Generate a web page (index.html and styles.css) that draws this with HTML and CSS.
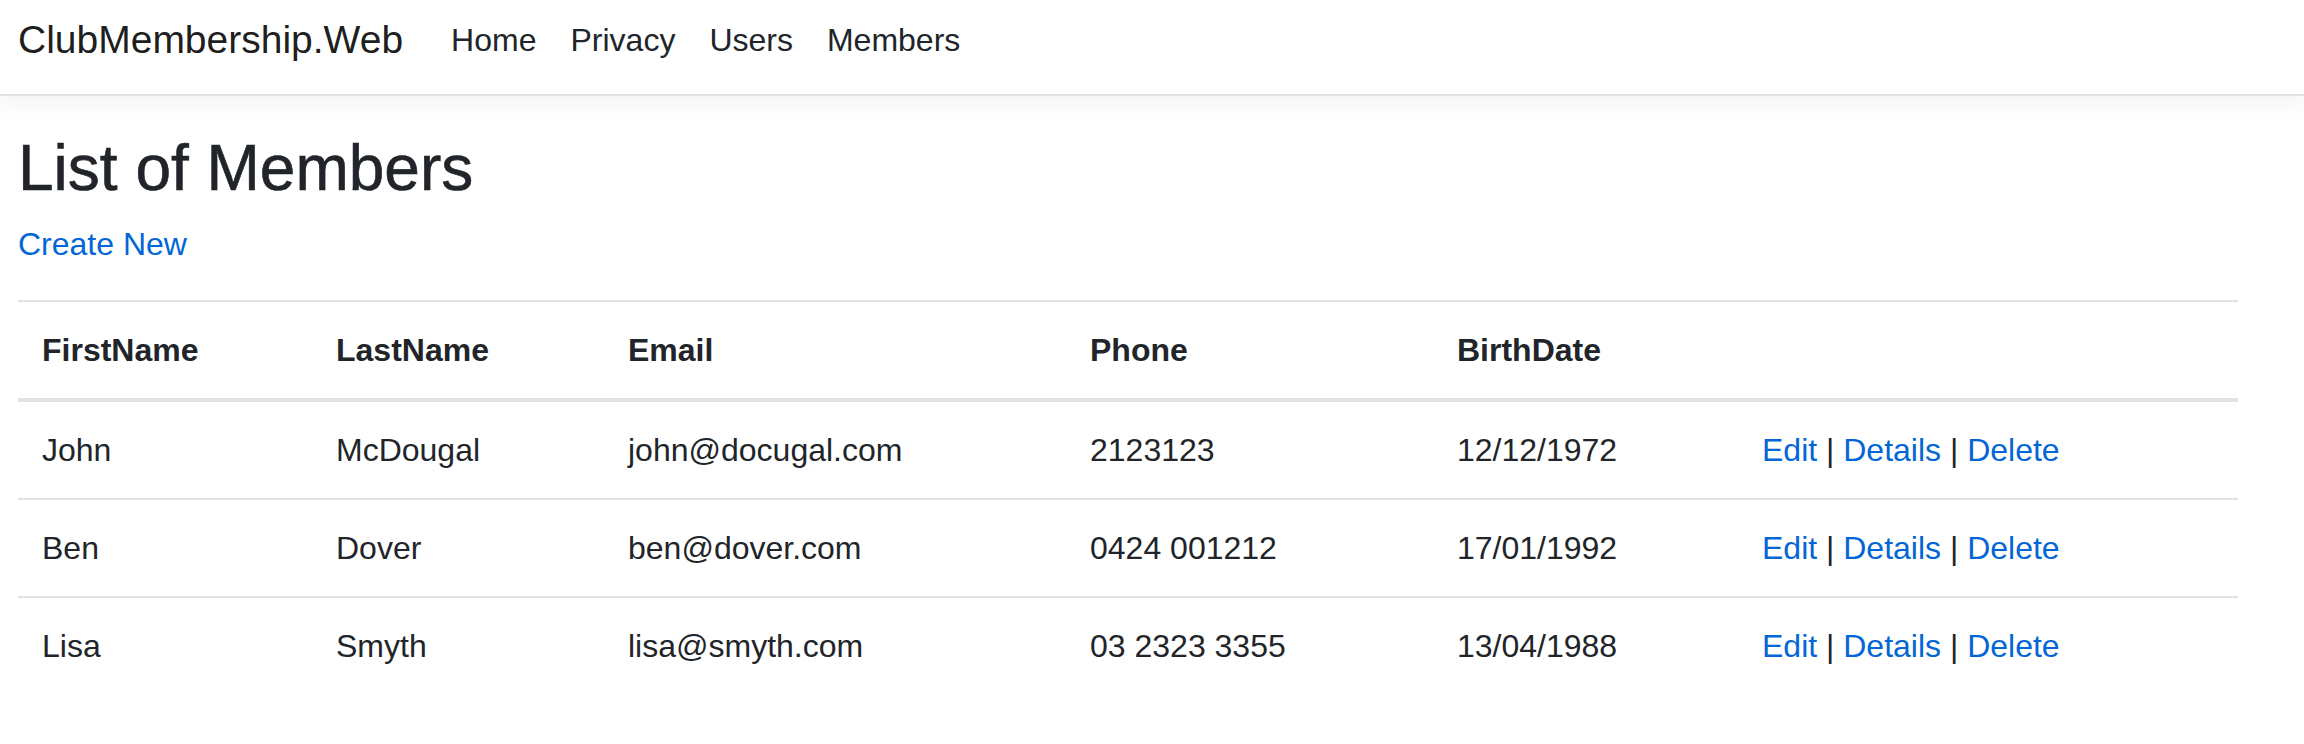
FILE: index.html
```html
<!DOCTYPE html>
<html lang="en">
<head>
<meta charset="utf-8">
<title>Members - ClubMembership.Web</title>
<link rel="stylesheet" href="styles.css">
</head>
<body>
<header class="navbar">
  <a class="brand" href="#">ClubMembership.Web</a>
  <nav class="nav">
    <a class="nav-link" href="#">Home</a>
    <a class="nav-link" href="#">Privacy</a>
    <a class="nav-link" href="#">Users</a>
    <a class="nav-link" href="#">Members</a>
  </nav>
</header>
<main class="main">
  <h1 class="title">List of Members</h1>
  <p class="actions-top"><a class="link" href="#">Create New</a></p>
  <table class="table">
    <colgroup>
      <col class="c1"><col class="c2"><col class="c3"><col class="c4"><col class="c5"><col class="c6">
    </colgroup>
    <thead>
      <tr><th>FirstName</th><th>LastName</th><th>Email</th><th>Phone</th><th>BirthDate</th><th></th></tr>
    </thead>
    <tbody>
      <tr><td>John</td><td>McDougal</td><td>john@docugal.com</td><td>2123123</td><td>12/12/1972</td><td><a class="link" href="#">Edit</a> | <a class="link" href="#">Details</a> | <a class="link" href="#">Delete</a></td></tr>
      <tr><td>Ben</td><td>Dover</td><td>ben@dover.com</td><td>0424 001212</td><td>17/01/1992</td><td><a class="link" href="#">Edit</a> | <a class="link" href="#">Details</a> | <a class="link" href="#">Delete</a></td></tr>
      <tr><td>Lisa</td><td>Smyth</td><td>lisa@smyth.com</td><td>03 2323 3355</td><td>13/04/1988</td><td><a class="link" href="#">Edit</a> | <a class="link" href="#">Details</a> | <a class="link" href="#">Delete</a></td></tr>
    </tbody>
  </table>
</main>
</body>
</html>
```
FILE: styles.css
```css
* { box-sizing: border-box; }
html, body {
  margin: 0;
  padding: 0;
  background: #fff;
  font-family: "Liberation Sans", Arial, sans-serif;
  color: #212529;
}
.navbar {
  display: flex;
  align-items: center;
  height: 96px;
  padding: 0 18px 14px 18px;
  border-bottom: 2px solid #dee2e6;
  box-shadow: 0 8px 24px rgba(0, 0, 0, 0.05);
  margin-bottom: 34px;
}
.brand {
  font-size: 39px;
  line-height: 60px;
  padding: 10px 0;
  margin-right: 31px;
  color: rgba(0, 0, 0, 0.9);
  text-decoration: none;
}
.nav {
  display: flex;
}
.nav-link {
  font-size: 32px;
  line-height: 48px;
  padding: 16px 17px;
  color: #212529;
  text-decoration: none;
}
.main {
  padding: 0 18px;
}
.title {
  margin: 0 0 13px 0;
  font-size: 64px;
  line-height: 77px;
  font-weight: 500;
  color: #212529;
  -webkit-text-stroke: 0.6px #212529;
}
.actions-top {
  margin: 0 0 32px 0;
  font-size: 32px;
  line-height: 48px;
}
.link {
  color: #0366d6;
  text-decoration: none;
}
.table {
  width: 2220px;
  table-layout: fixed;
  border-collapse: collapse;
  font-size: 32px;
  line-height: 48px;
}
.c1 { width: 294px; }
.c2 { width: 292px; }
.c3 { width: 462px; }
.c4 { width: 367px; }
.c5 { width: 305px; }
.c6 { width: 500px; }
.table th, .table td {
  padding: 24px;
  text-align: left;
  vertical-align: top;
  border-top: 2px solid #dee2e6;
  white-space: nowrap;
}
.table th {
  font-weight: 700;
  border-bottom: 4px solid #dee2e6;
}
```
